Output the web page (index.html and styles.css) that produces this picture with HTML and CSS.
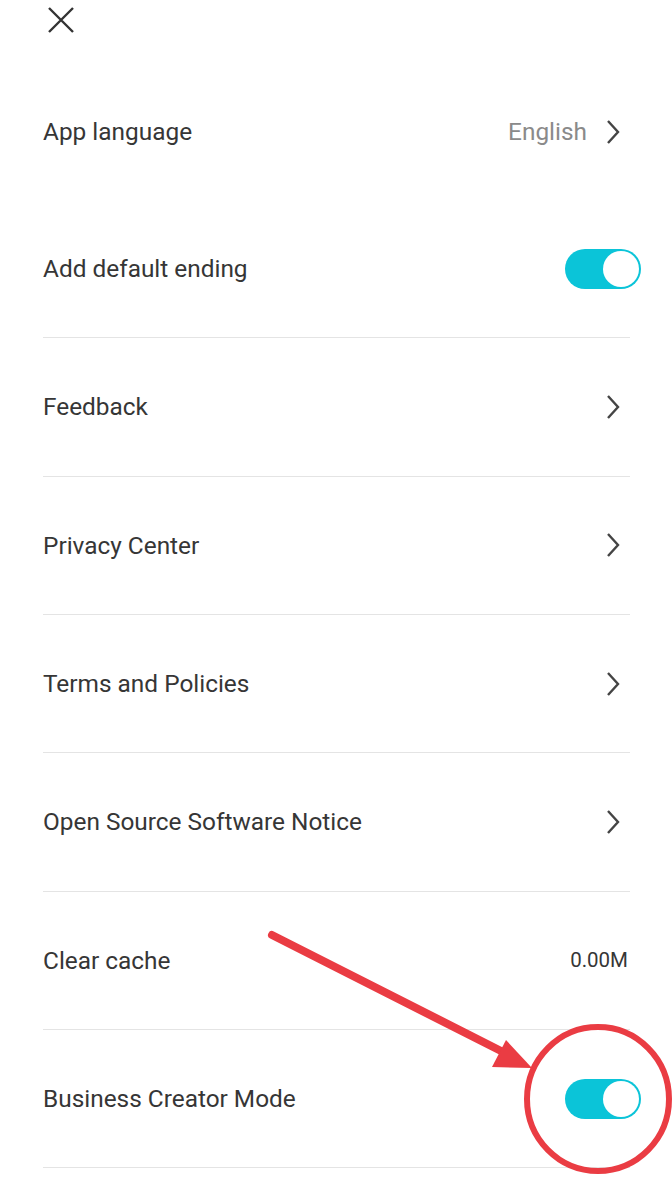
FILE: index.html
```html
<!DOCTYPE html>
<html lang="en">
<head>
  <meta charset="UTF-8" />
  <meta name="viewport" content="width=device-width, initial-scale=1.0"/>
  <title>Settings</title>
  <link rel="stylesheet" href="styles.css">
</head>
<body>
  <div class="header">
    <svg class="close-icon" width="26" height="26" viewBox="0 0 26 26">
      <path d="M1 1 L25 25 M25 1 L1 25" stroke="#333" stroke-width="2.4" fill="none"/>
    </svg>
  </div>

  <div class="list">
    <div class="row first">
      <span class="label">App language</span>
      <span class="value">
        <span class="lang">English</span>
        <svg class="chevron" width="14" height="26" viewBox="0 0 14 26"><path d="M2 2 L12 13 L2 24" stroke="#444" stroke-width="2.4" fill="none"/></svg>
      </span>
    </div>
    <div class="row">
      <span class="label">Add default ending</span>
      <span class="toggle on"><span class="knob"></span></span>
    </div>
    <div class="row">
      <span class="label">Feedback</span>
      <svg class="chevron" width="14" height="26" viewBox="0 0 14 26"><path d="M2 2 L12 13 L2 24" stroke="#444" stroke-width="2.4" fill="none"/></svg>
    </div>
    <div class="row">
      <span class="label">Privacy Center</span>
      <svg class="chevron" width="14" height="26" viewBox="0 0 14 26"><path d="M2 2 L12 13 L2 24" stroke="#444" stroke-width="2.4" fill="none"/></svg>
    </div>
    <div class="row">
      <span class="label">Terms and Policies</span>
      <svg class="chevron" width="14" height="26" viewBox="0 0 14 26"><path d="M2 2 L12 13 L2 24" stroke="#444" stroke-width="2.4" fill="none"/></svg>
    </div>
    <div class="row">
      <span class="label">Open Source Software Notice</span>
      <svg class="chevron" width="14" height="26" viewBox="0 0 14 26"><path d="M2 2 L12 13 L2 24" stroke="#444" stroke-width="2.4" fill="none"/></svg>
    </div>
    <div class="row">
      <span class="label">Clear cache</span>
      <span class="cache">0.00M</span>
    </div>
    <div class="row">
      <span class="label">Business Creator Mode</span>
      <span class="toggle on"><span class="knob"></span></span>
    </div>
  </div>

  <!-- red annotation drawn over the screenshot -->
  <svg class="annotation" width="672" height="1190" viewBox="0 0 672 1190">
    <line x1="272" y1="935" x2="505" y2="1053" stroke="#ea3c43" stroke-width="8" stroke-linecap="round"/>
    <polygon points="532,1068 506,1040 492,1067" fill="#ea3c43"/>
    <ellipse cx="598" cy="1099" rx="71" ry="72" stroke="#ea3c43" stroke-width="6" fill="none"/>
  </svg>
</body>
</html>
```

FILE: styles.css
```css
* {
  margin: 0;
  padding: 0;
  box-sizing: border-box;
}
body {
  font-family: Roboto, "Noto Sans", Arial, sans-serif;
  background-color: #fff;
  color: #333;
  width: 672px;
  height: 1190px;
  position: relative;
  overflow: hidden;
}
.header {
  height: 63px;
  padding: 7px 0 0 48px;
}
.close-icon {
  display: block;
}
.list {
  padding: 0 42px 0 43px;
}
.row {
  display: flex;
  align-items: center;
  justify-content: space-between;
  height: 138.33px;
  border-bottom: 1px solid #e4e4e4;
}
.row.first {
  height: 137px;
  border-bottom: none;
}
.label {
  font-size: 24.4px;
  color: #363636;
}
.value {
  display: flex;
  align-items: center;
  gap: 19px;
}
.lang {
  font-size: 24.4px;
  color: #8a8a8a;
}
.chevron {
  display: block;
  margin-right: 10px;
}
.cache {
  font-size: 20.5px;
  color: #363636;
  margin-right: 2px;
}
.toggle {
  display: flex;
  align-items: center;
  justify-content: flex-end;
  width: 76px;
  height: 40px;
  border-radius: 20px;
  background: #0bc4d8;
  padding: 2px;
  margin-right: -11px;
}
.knob {
  width: 36px;
  height: 36px;
  border-radius: 50%;
  background: #fff;
}
.annotation {
  position: absolute;
  top: 0;
  left: 0;
  pointer-events: none;
}
```
